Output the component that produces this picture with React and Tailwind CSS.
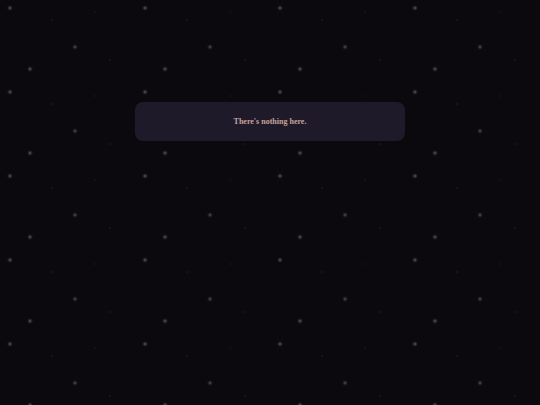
export default function App() {
  return (
    <div className="min-h-screen w-full bg-[#0b090e] bg-[radial-gradient(circle_at_10px_8px,rgba(180,165,200,0.5)_0,rgba(170,160,190,0.18)_1.5px,transparent_3px),radial-gradient(circle_at_75px_47px,rgba(180,165,200,0.45)_0,rgba(170,160,190,0.15)_1.5px,transparent_3px),radial-gradient(circle_at_30px_69px,rgba(180,165,200,0.5)_0,rgba(170,160,190,0.18)_1.5px,transparent_3px),radial-gradient(circle_at_52px_20px,rgba(150,140,170,0.25)_0,transparent_1px),radial-gradient(circle_at_110px_60px,rgba(150,140,170,0.25)_0,transparent_1px),radial-gradient(circle_at_95px_12px,rgba(150,140,170,0.2)_0,transparent_1px)] bg-size-[135px_84px] pt-[102px] flex justify-center items-start">
      <div className="w-[270px] h-[39px] rounded-lg bg-[#1e1a29] flex items-center justify-center">
        <p className="font-['Liberation_Serif',serif] text-[8px] font-bold text-[#c7a29c]">
          There's nothing here.
        </p>
      </div>
    </div>
  );
}
